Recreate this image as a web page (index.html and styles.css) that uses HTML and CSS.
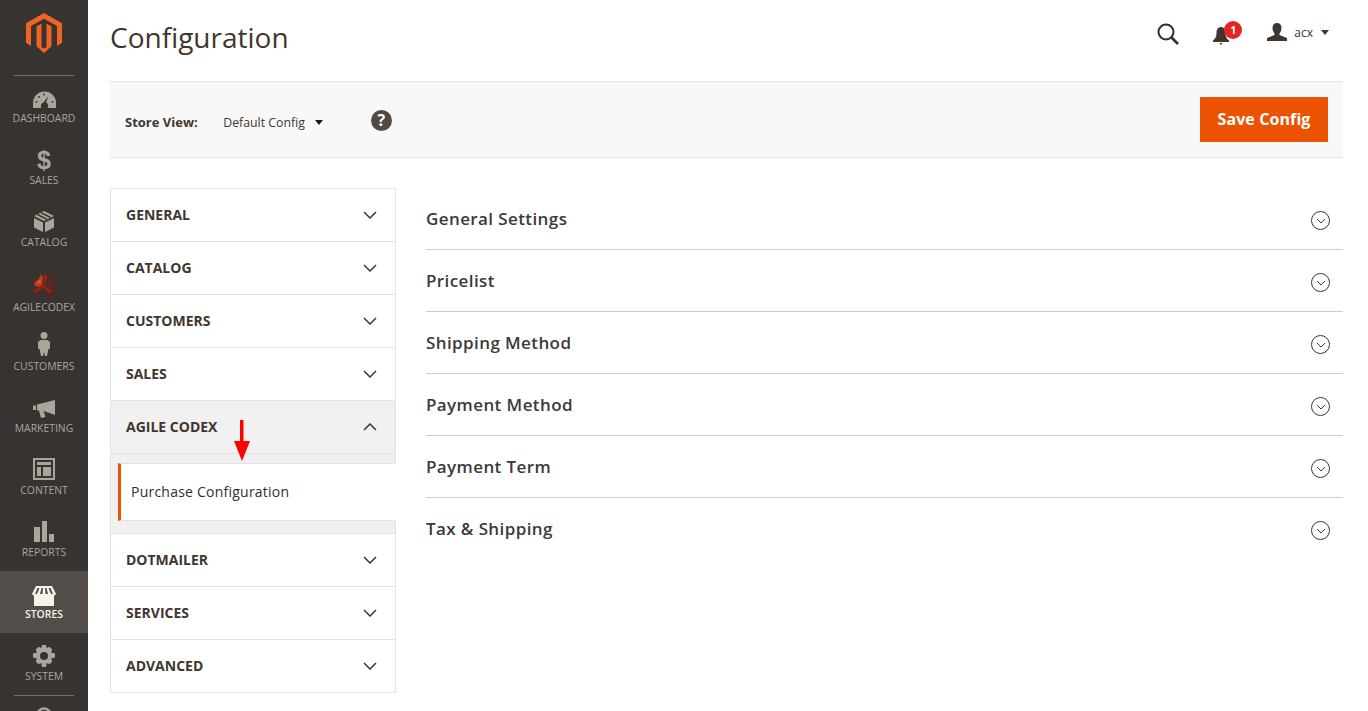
FILE: index.html
```html
<!DOCTYPE html>
<html lang="en">
<head>
<meta charset="utf-8">
<title>Configuration</title>
<link rel="stylesheet" href="styles.css">
</head>
<body>
<div class="page">
  <nav class="side">
    <div class="logo">
      <svg width="36" height="40" viewBox="0 0 36 40"><path fill="#f26322" d="M18 0 36 10.300V30.100L31 33V13.100L18 5.700 5 13.100V33L0 30.100V10.300Z"/><path fill="#f26322" d="M15.500 10.500V34.200L18 35.600 20.500 34.200V10.500L25.500 13.400V33.200L18 40 10.500 33.200V13.400Z"/></svg>
    </div>
    <a class="item item-first">
      <svg class="ico" width="23" height="17" viewBox="0 0 23 17"><path fill="#aaa69c" fill-rule="evenodd" d="M0 17V12A11.500 11.500 0 0 1 23 12V17H14.500A3.500 3.500 0 0 0 13 11.500L15.500 5 10.500 11.500A3.500 3.500 0 0 0 8.500 17Z"/><g fill="#373330"><circle cx="3.500" cy="11" r=".9"/><circle cx="6" cy="6" r=".9"/><circle cx="11" cy="3.500" r=".9"/><circle cx="19.500" cy="11" r=".9"/></g></svg>
      <span>DASHBOARD</span>
    </a>
    <a class="item">
      <span class="dollar">$</span>
      <span>SALES</span>
    </a>
    <a class="item">
      <svg class="ico" width="20" height="21" viewBox="0 0 20 21"><path fill="#aaa69c" d="M10 0 20 5 10 10 0 5ZM0 7 9 11.500V21L0 16.500ZM20 7V16.500L11 21V11.500Z"/><path stroke="#373330" stroke-width="1.500" d="M3.500 3.500 13 8.300M7 1.700 16.500 6.500"/></svg>
      <span>CATALOG</span>
    </a>
    <a class="item item-agile">
      <svg class="ico" width="24" height="24" viewBox="0 0 24 24"><path fill="none" stroke="#6e1a10" stroke-width="2" d="M15 2A10.500 10.500 0 0 1 11 23"/><path fill="none" stroke="#9a1f10" stroke-width="3" d="M2 19 11 13 19 19"/><path fill="#c9391a" d="M2 10 7 6 9 1 11 5 10 12 6 14 3 13Z"/><path fill="#e0561e" d="M5 9 8 6 9 9 7 11Z"/><path fill="#a3200f" d="M12 1 15 3 14 10 12 12Z"/><circle cx="18" cy="11" r="2.500" fill="#7c1d10"/></svg>
      <span>AGILECODEX</span>
    </a>
    <a class="item item-cust">
      <svg class="ico" width="12" height="24" viewBox="0 0 12 24"><circle cx="6" cy="3.500" r="3.500" fill="#aaa69c"/><path fill="#aaa69c" d="M2.500 8H9.500L12 10V16.500L10.500 17 9 24H7L6 20 5 24H3L1.500 17 0 16.500V10Z"/></svg>
      <span>CUSTOMERS</span>
    </a>
    <a class="item">
      <svg class="ico" width="22" height="18" viewBox="0 0 22 18"><path fill="#aaa69c" d="M0 5.500H3V10H0ZM4 4.500 22 0V15L10.500 11 12.500 17 8 18 6 10.500H4Z"/></svg>
      <span>MARKETING</span>
    </a>
    <a class="item">
      <svg class="ico" width="22" height="22" viewBox="0 0 22 22"><path fill="#aaa69c" fill-rule="evenodd" d="M0 0H22V22H0ZM2 2V20H20V2ZM4 4H18V7H4ZM4 9H8V18H4ZM10 9H18V18H10Z"/></svg>
      <span>CONTENT</span>
    </a>
    <a class="item">
      <svg class="ico" width="20" height="21" viewBox="0 0 20 21"><path fill="#aaa69c" d="M0 6H6V21H0ZM8 0H13V21H8ZM15 13H20V21H15Z"/></svg>
      <span>REPORTS</span>
    </a>
    <a class="item item-active">
      <svg class="ico ico-store" width="24" height="20" viewBox="0 0 24 20"><path fill="#f7f3eb" fill-rule="evenodd" d="M4 0H20L24 8 22 10V20H2V10L0 8ZM5.500 2 3 8H5L7.500 2ZM9.500 2 8 8H10.500L11 2ZM13 2 13.500 8H16L14.500 2ZM16.500 2 19 8H21L18.500 2Z"/></svg>
      <span>STORES</span>
    </a>
    <a class="item">
      <svg class="ico ico-gear" width="22" height="22" viewBox="0 0 22 22"><path fill="#aaa69c" fill-rule="evenodd" d="M9 0H13L13.700 3 16.500 1.800 19.300 4.700 18 7.400 22 8.500V12.500L18 13.600 19.300 16.500 16.500 19.300 13.700 18 13 22H9L8.300 18 5.500 19.300 2.700 16.500 4 13.600 0 12.500V8.500L4 7.400 2.700 4.700 5.500 1.800 8.300 3ZM11 7A4 4 0 1 0 11 15 4 4 0 1 0 11 7Z"/></svg>
      <span>SYSTEM</span>
    </a>
    <div class="side-rule"></div>
    <svg class="ico-clip" width="16" height="16" viewBox="0 0 16 16"><path fill="none" stroke="#aaa69c" stroke-width="2.500" d="M1.500 8A6.500 6.500 0 0 1 14.500 8V16H1.500Z"/></svg>
  </nav>

  <main class="main">
    <header class="top">
      <h1>Configuration</h1>
      <div class="top-actions">
        <svg class="search" width="22" height="22" viewBox="0 0 22 22"><circle cx="9" cy="9" r="7.500" fill="none" stroke="#33302e" stroke-width="2"/><path d="M14.500 14.500 21 21" stroke="#33302e" stroke-width="2.600"/></svg>
        <div class="bell">
          <svg width="16" height="18" viewBox="0 0 16 18"><path fill="#41362f" d="M8 0C11.500 0 12.500 3 12.500 6.500C12.500 10 14 12 16 13.500V15H0V13.500C2 12 3.500 10 3.500 6.500C3.500 3 4.500 0 8 0ZM6.500 16H9.500L8 18Z"/></svg>
          <span class="badge">1</span>
        </div>
        <div class="user">
          <svg width="20" height="18" viewBox="0 0 20 18"><path fill="#41362f" d="M10 0C13 0 14.500 2 14.500 5C14.500 7.500 13.500 9.500 12.500 10.500V12L20 15V18H0V15L7.500 12V10.500C6.500 9.500 5.500 7.500 5.500 5C5.500 2 7 0 10 0Z"/></svg>
          <span class="user-name">acx</span>
          <span class="caret caret-user"></span>
        </div>
      </div>
    </header>

    <section class="scope">
      <span class="scope-label">Store View:</span>
      <span class="scope-value">Default Config</span>
      <span class="caret caret-scope"></span>
      <span class="help">?</span>
      <button class="save">Save Config</button>
    </section>

    <div class="columns">
      <aside class="tabs">
        <div class="tab"><span>GENERAL</span><svg class="chev" width="14" height="8" viewBox="0 0 14 8"><path d="M1 1 7 7 13 1" fill="none" stroke="#41362f" stroke-width="1.500"/></svg></div>
        <div class="tab"><span>CATALOG</span><svg class="chev" width="14" height="8" viewBox="0 0 14 8"><path d="M1 1 7 7 13 1" fill="none" stroke="#41362f" stroke-width="1.500"/></svg></div>
        <div class="tab"><span>CUSTOMERS</span><svg class="chev" width="14" height="8" viewBox="0 0 14 8"><path d="M1 1 7 7 13 1" fill="none" stroke="#41362f" stroke-width="1.500"/></svg></div>
        <div class="tab"><span>SALES</span><svg class="chev" width="14" height="8" viewBox="0 0 14 8"><path d="M1 1 7 7 13 1" fill="none" stroke="#41362f" stroke-width="1.500"/></svg></div>
        <div class="tab tab-open"><span>AGILE CODEX</span><svg class="chev" width="14" height="8" viewBox="0 0 14 8"><path d="M1 7 7 1 13 7" fill="none" stroke="#41362f" stroke-width="1.500"/></svg>
          <svg class="arrow" width="18" height="42" viewBox="0 0 18 42"><path fill="#f00" d="M7 0H10.500V21H17L9 41 1 21H7Z"/></svg>
        </div>
        <div class="sub">
          <div class="sub-link">Purchase Configuration</div>
        </div>
        <div class="tab"><span>DOTMAILER</span><svg class="chev" width="14" height="8" viewBox="0 0 14 8"><path d="M1 1 7 7 13 1" fill="none" stroke="#41362f" stroke-width="1.500"/></svg></div>
        <div class="tab"><span>SERVICES</span><svg class="chev" width="14" height="8" viewBox="0 0 14 8"><path d="M1 1 7 7 13 1" fill="none" stroke="#41362f" stroke-width="1.500"/></svg></div>
        <div class="tab"><span>ADVANCED</span><svg class="chev" width="14" height="8" viewBox="0 0 14 8"><path d="M1 1 7 7 13 1" fill="none" stroke="#41362f" stroke-width="1.500"/></svg></div>
      </aside>

      <div class="sections">
        <div class="section"><span>General Settings</span><span class="round"><svg width="10" height="6" viewBox="0 0 10 6"><path d="M1 1 5 5 9 1" fill="none" stroke="#41362f"/></svg></span></div>
        <div class="section"><span>Pricelist</span><span class="round"><svg width="10" height="6" viewBox="0 0 10 6"><path d="M1 1 5 5 9 1" fill="none" stroke="#41362f"/></svg></span></div>
        <div class="section"><span>Shipping Method</span><span class="round"><svg width="10" height="6" viewBox="0 0 10 6"><path d="M1 1 5 5 9 1" fill="none" stroke="#41362f"/></svg></span></div>
        <div class="section"><span>Payment Method</span><span class="round"><svg width="10" height="6" viewBox="0 0 10 6"><path d="M1 1 5 5 9 1" fill="none" stroke="#41362f"/></svg></span></div>
        <div class="section"><span>Payment Term</span><span class="round"><svg width="10" height="6" viewBox="0 0 10 6"><path d="M1 1 5 5 9 1" fill="none" stroke="#41362f"/></svg></span></div>
        <div class="section section-last"><span>Tax &amp; Shipping</span><span class="round"><svg width="10" height="6" viewBox="0 0 10 6"><path d="M1 1 5 5 9 1" fill="none" stroke="#41362f"/></svg></span></div>
      </div>
    </div>
  </main>
</div>
</body>
</html>
```

FILE: styles.css
```css
* { box-sizing: border-box; }
html, body { margin: 0; height: 100%; overflow: hidden; background: #fff; }
body { font-family: "Open Sans", sans-serif; color: #41362f; }

.page { display: flex; height: 711px; overflow: hidden; }

.side {
  width: 88px;
  flex: none;
  height: 711px;
  overflow: hidden;
  background: #373330;
  display: flex;
  flex-direction: column;
  align-items: stretch;
}
.logo {
  height: 76px;
  margin: 0 14px;
  padding-top: 13px;
  border-bottom: 1px solid #736e69;
  display: flex;
  justify-content: center;
  align-items: flex-start;
  flex: none;
}
.item {
  height: 62px;
  flex: none;
  display: flex;
  flex-direction: column;
  align-items: center;
  justify-content: flex-end;
  padding-bottom: 12px;
  font-size: 10.4px;
  line-height: 14px;
  color: #aaa69c;
}
.item-first { height: 61px; }
.item .ico { margin-bottom: 3px; }
.item .ico-store { margin-bottom: 1px; }
.item .ico-gear { margin-bottom: 2px; }
.item-agile { height: 65px; }
.item-cust { height: 59px; }
.item-active { background: #524d49; color: #f7f3eb; font-weight: 600; }
.dollar { font-size: 25px; line-height: 24px; font-weight: 700; font-family: "Liberation Sans", sans-serif; margin-bottom: 1px; }
.side-rule { height: 1px; margin: 0 14px; background: #736e69; flex: none; }
.ico-clip { margin: 11px auto 0; flex: none; }

.main { flex: 1; min-width: 0; padding: 0 25px 0 22px; }

.top { height: 81px; display: flex; align-items: flex-start; justify-content: space-between; }
h1 { margin: 14px 0 0; font-size: 28px; line-height: 46px; font-weight: 400; color: #41362f; }
.top-actions { display: flex; align-items: flex-start; }
.search { margin: 23px 0 0; }
.bell { position: relative; margin: 27px 0 0 34px; width: 16px; height: 18px; }
.badge {
  position: absolute;
  left: 11px;
  top: -6px;
  width: 18px;
  height: 18px;
  border-radius: 50%;
  background: #e22626;
  color: #fff;
  font-size: 10px;
  font-weight: 700;
  line-height: 18px;
  text-align: center;
}
.user { display: flex; align-items: center; margin: 23px 14px 0 38px; height: 18px; }
.user-name { font-size: 12px; margin-left: 7px; color: #41362f; }
.caret {
  display: inline-block;
  width: 0;
  height: 0;
  border-left: 4px solid transparent;
  border-right: 4px solid transparent;
  border-top: 5px solid #41362f;
  margin-left: 7px;
}
.caret-user { margin-left: 8px; }

.scope {
  height: 77px;
  background: #f8f8f8;
  border-top: 1px solid #e3e3e3;
  border-bottom: 1px solid #e3e3e3;
  display: flex;
  align-items: center;
  padding: 0 15px;
  line-height: 16px;
}
.scope-label { font-weight: 700; color: #41362f; font-size: 13px; margin-top: 5px; }
.scope-value { margin: 6px 0 0 25.500px; color: #41362f; font-size: 12.3px; }
.caret-scope { margin: 6px 0 0 10px; border-top-color: #1a1a1a; }
.help {
  margin: 2px 0 0 48px;
  width: 21px;
  height: 21px;
  border-radius: 50%;
  background: #514943;
  color: #fff;
  font-weight: 700;
  font-size: 16px;
  line-height: 21px;
  text-align: center;
}
.save {
  margin-left: auto;
  width: 128px;
  height: 45px;
  border: 0;
  padding: 0 0 2px;
  background: #eb5202;
  color: #fff;
  font-family: "Open Sans", sans-serif;
  font-size: 16px;
  font-weight: 700;
  letter-spacing: .1px;
}

.columns { display: flex; margin-top: 30px; align-items: flex-start; }
.tabs { width: 286px; flex: none; border: 1px solid #e3e3e3; border-top: 1px solid #e3e3e3; }
.tab {
  position: relative;
  height: 53px;
  display: flex;
  align-items: center;
  justify-content: space-between;
  padding: 0 18px 0 15px;
  font-size: 14px;
  font-weight: 700;
  color: #41362f;
  border-bottom: 1px solid #e3e3e3;
}
.tab > span { margin-top: -2px; }
.tab:last-child { border-bottom: 0; height: 52px; }
.tab-open { background: #f1f1f1; }
.arrow { position: absolute; left: 122px; top: 19px; z-index: 2; }
.sub { background: #f1f1f1; padding: 9px 0 12px; border-bottom: 1px solid #e3e3e3; }
.sub-link {
  height: 58px;
  margin: 0 -1px 0 7px;
  background: #fff;
  border-left: 3px solid #eb5202;
  border-top: 1px solid #e3e3e3;
  border-bottom: 1px solid #e3e3e3;
  padding: 0 0 2px 10px;
  display: flex;
  align-items: center;
  font-size: 14px;
  font-weight: 400;
  letter-spacing: .23px;
  color: #303030;
}

.sections { flex: 1; margin-left: 30px; }
.section {
  height: 62px;
  display: flex;
  align-items: center;
  justify-content: space-between;
  padding-right: 13px;
  border-bottom: 1px solid #cccccc;
  font-size: 17px;
  font-weight: 600;
  letter-spacing: .4px;
  color: #3a3a3a;
}
.section-last { border-bottom: 1px solid transparent; }
.round {
  width: 19px;
  height: 19px;
  margin-top: 3px;
  border: 1px solid #41362f;
  border-radius: 50%;
  display: flex;
  align-items: center;
  justify-content: center;
  padding-top: 2px;
}
```
